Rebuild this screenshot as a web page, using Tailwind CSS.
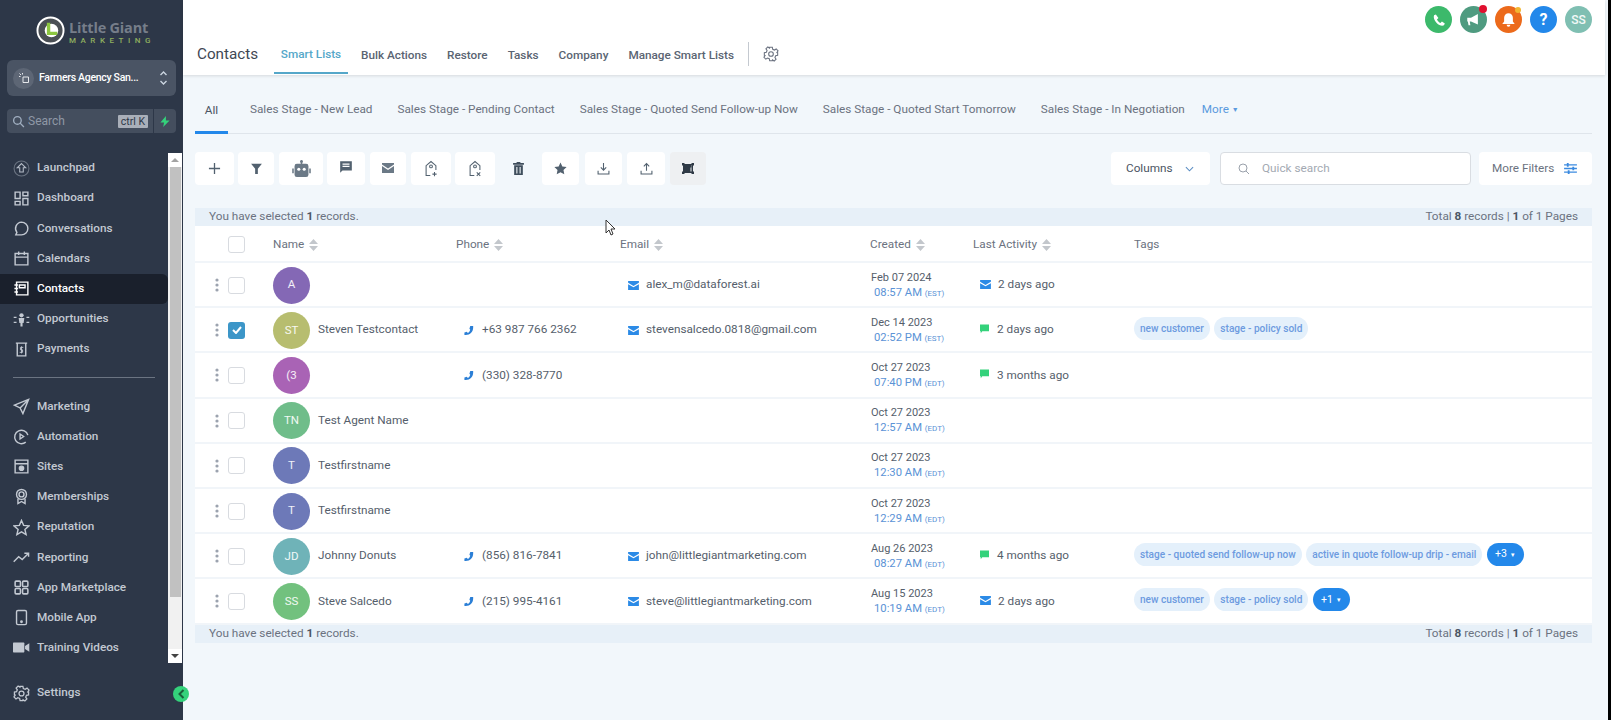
<!doctype html>
<html lang="en">
<head>
    <meta charset="UTF-8">
    <title>Contacts</title>
    <script src="https://cdn.jsdelivr.net/npm/@tailwindcss/browser@4"></script>
</head>
<body class="font-['Roboto',sans-serif] bg-[#f2f7fb] overflow-hidden">
<div class="flex w-[1611px] h-[720px] overflow-hidden relative">

    <!-- sidebar -->
    <aside class="w-[183px] shrink-0 bg-[#2d3748] flex flex-col relative">
        <div class="h-[60px] pt-[16px] pl-[36px] flex gap-[4px]">
            <svg class="w-[29px] h-[29px]" viewBox="0 0 30 30" fill="none">
                <circle cx="15" cy="15" r="13.5" fill="#4a4f55" stroke="#fff" stroke-width="2"/>
                <circle cx="16" cy="15" r="7" fill="#fff"/>
                <path d="M13 7v11h9" stroke="#8cc63f" stroke-width="3.5" fill="none"/>
            </svg>
            <div class="pt-[4px]">
                <div class="text-[#767e8a] text-[14.5px] font-bold leading-[15px] tracking-[-0.2px] whitespace-nowrap font-['Open_Sans',sans-serif]">Little Giant</div>
                <div class="text-[#8fae5f] text-[8px] font-medium leading-[10px] tracking-[4.5px] mt-[1px] whitespace-nowrap">MARKETING</div>
            </div>
        </div>

        <div class="mx-[7px] h-[36px] rounded-[6px] bg-[#4a5464] flex items-center pl-[6px] pr-[8px]">
            <div class="w-[21px] h-[21px] rounded-full bg-[#5d6675] flex items-center justify-center">
                <svg class="w-[12px] h-[12px]" viewBox="0 0 24 24" fill="none" stroke="#e5e7eb" stroke-width="2"><path d="M10 10h11v11H10zM3 3l3 3M9 2v3M2 9h3"/></svg>
            </div>
            <span class="ml-[5px] text-white text-[10.5px] tracking-[-0.3px] font-medium whitespace-nowrap">Farmers Agency San...</span>
            <svg class="w-[9px] h-[16px] ml-auto" viewBox="0 0 9 16" fill="none" stroke="#cbd5e0" stroke-width="1.4"><path d="M1.500 5 4.500 2l3 3M1.500 11l3 3 3-3"/></svg>
        </div>

        <div class="mx-[7px] mt-[13px] flex h-[24px]">
            <div class="w-[146px] bg-[#444e5e] rounded-l-[4px] flex items-center pl-[5px] pr-[5px]">
                <svg class="w-[13px] h-[13px]" viewBox="0 0 24 24" fill="none" stroke="#a0aec0" stroke-width="2.5"><circle cx="10" cy="10" r="7"/><path d="m15 15 7 7"/></svg>
                <span class="ml-[3px] text-[#8f98a6] text-[12px]">Search</span>
                <span class="ml-auto bg-[#a9afb9] text-[#2d3748] text-[10.5px] leading-[13px] px-[3px] rounded-[1px] whitespace-nowrap">ctrl K</span>
            </div>
            <div class="w-[23px] bg-[#444e5e] rounded-r-[4px] border-l border-[#2d3748] flex items-center justify-center">
                <svg class="w-[10px] h-[11px]" viewBox="0 0 10 12" fill="#34d27b"><path d="M6 0 0 7h4l-1 5 7-7H6z"/></svg>
            </div>
        </div>

        <nav class="mt-[20px] w-[168px] text-[#c3c9d2] text-[11.75px] font-medium">
            <a class="h-[30.2px] pl-[13px] flex items-center gap-[7px]">
                <svg class="w-[17px] h-[17px]" viewBox="0 0 24 24" fill="none" stroke="#b5bcc7" stroke-width="1.5"><circle cx="12" cy="12" r="10.5" stroke="#6b7482"/><path d="M12 5l6 6h-3.500v6h-5v-6H6z"/></svg>
                <span>Launchpad</span>
            </a>
            <a class="h-[30.2px] pl-[13px] flex items-center gap-[7px]">
                <svg class="w-[17px] h-[17px]" viewBox="0 0 24 24" fill="none" stroke="#c3c9d2" stroke-width="2"><path d="M3 3h7v9H3zM14 3h7v5h-7zM14 12h7v9h-7zM3 16h7v5H3z"/></svg>
                <span>Dashboard</span>
            </a>
            <a class="h-[30.2px] pl-[13px] flex items-center gap-[7px]">
                <svg class="w-[17px] h-[17px]" viewBox="0 0 24 24" fill="none" stroke="#c3c9d2" stroke-width="2"><path d="M12 3a9 9 0 0 1 0 18H4l1.500-3.500A9 9 0 0 1 12 3z"/></svg>
                <span>Conversations</span>
            </a>
            <a class="h-[30.2px] pl-[13px] flex items-center gap-[7px]">
                <svg class="w-[17px] h-[17px]" viewBox="0 0 24 24" fill="none" stroke="#c3c9d2" stroke-width="2"><path d="M3 5h18v16H3zM3 10h18M8 2v5M16 2v5"/></svg>
                <span>Calendars</span>
            </a>
            <a class="h-[30.2px] pl-[13px] flex items-center gap-[7px] bg-[#1a202c] rounded-r-[6px] text-white">
                <svg class="w-[17px] h-[17px]" viewBox="0 0 24 24" fill="none" stroke="#fff" stroke-width="2"><path d="M5 3h16v18H5zM9 7h8v4H9zM2 7h5M2 12h5M2 17h5"/></svg>
                <span>Contacts</span>
            </a>
            <a class="h-[30.2px] pl-[13px] flex items-center gap-[7px]">
                <svg class="w-[17px] h-[17px]" viewBox="0 0 24 24" fill="#c3c9d2"><circle cx="12" cy="6" r="3"/><path d="M8 10h8l-1 7h-1.500v5h-3v-5H9zM1 8h4v2H1zM19 8h4v2h-4zM1 15h4v2H1zM19 15h4v2h-4z"/></svg>
                <span>Opportunities</span>
            </a>
            <a class="h-[30.2px] pl-[13px] flex items-center gap-[7px]">
                <svg class="w-[17px] h-[17px]" viewBox="0 0 24 24" fill="none" stroke="#c3c9d2" stroke-width="2"><path d="M4 3h16M6 3v18h12V3"/><path d="M14.500 9h-4v3.500h3V16h-4M12 7.500v10" stroke-width="1.300"/></svg>
                <span>Payments</span>
            </a>
            <div class="my-[13px] mx-[13px] h-[1px] bg-[#6b7482]"></div>
            <a class="h-[30.2px] pl-[13px] flex items-center gap-[7px]">
                <svg class="w-[17px] h-[17px]" viewBox="0 0 24 24" fill="none" stroke="#c3c9d2" stroke-width="2"><path d="M22 2 2 10l8 4 4 8zM10 14 22 2"/></svg>
                <span>Marketing</span>
            </a>
            <a class="h-[30.2px] pl-[13px] flex items-center gap-[7px]">
                <svg class="w-[17px] h-[17px]" viewBox="0 0 24 24" fill="none" stroke="#c3c9d2" stroke-width="2"><path d="M21 10a9.500 9.500 0 1 0-3 10"/><path d="M10 8.500 15 12l-5 3.500z"/></svg>
                <span>Automation</span>
            </a>
            <a class="h-[30.2px] pl-[13px] flex items-center gap-[7px]">
                <svg class="w-[17px] h-[17px]" viewBox="0 0 24 24" fill="none" stroke="#c3c9d2" stroke-width="2"><path d="M3 3h18v18H3zM3 8h18"/><circle cx="12" cy="14.500" r="3" fill="#c3c9d2"/></svg>
                <span>Sites</span>
            </a>
            <a class="h-[30.2px] pl-[13px] flex items-center gap-[7px]">
                <svg class="w-[17px] h-[17px]" viewBox="0 0 24 24" fill="none" stroke="#c3c9d2" stroke-width="2"><circle cx="12" cy="9" r="7"/><circle cx="12" cy="9" r="3.500"/><path d="M7 15v7l5-3 5 3v-7"/></svg>
                <span>Memberships</span>
            </a>
            <a class="h-[30.2px] pl-[13px] flex items-center gap-[7px]">
                <svg class="w-[17px] h-[17px]" viewBox="0 0 24 24" fill="none" stroke="#c3c9d2" stroke-width="2"><path d="m12 2 3 7 7.500.7-5.700 5 1.700 7.300-6.500-3.900L5.500 22l1.700-7.300-5.700-5L9 9z"/></svg>
                <span>Reputation</span>
            </a>
            <a class="h-[30.2px] pl-[13px] flex items-center gap-[7px]">
                <svg class="w-[17px] h-[17px]" viewBox="0 0 24 24" fill="none" stroke="#c3c9d2" stroke-width="2"><path d="m1 18 7-7 5 4 9-9M16 6h6v5"/></svg>
                <span>Reporting</span>
            </a>
            <a class="h-[30.2px] pl-[13px] flex items-center gap-[7px]">
                <svg class="w-[17px] h-[17px]" viewBox="0 0 24 24" fill="none" stroke="#c3c9d2" stroke-width="2.200"><rect x="3" y="3" width="7.500" height="7.500" rx="1.500"/><rect x="13.500" y="3" width="7.500" height="7.500" rx="1.500"/><rect x="3" y="13.500" width="7.500" height="7.500" rx="1.500"/><rect x="13.500" y="13.500" width="7.500" height="7.500" rx="1.500"/></svg>
                <span>App Marketplace</span>
            </a>
            <a class="h-[30.2px] pl-[13px] flex items-center gap-[7px]">
                <svg class="w-[17px] h-[17px]" viewBox="0 0 24 24" fill="none" stroke="#c3c9d2" stroke-width="2"><rect x="5" y="2" width="14" height="20" rx="2"/><circle cx="12" cy="18" r="1" fill="#c3c9d2"/></svg>
                <span>Mobile App</span>
            </a>
            <a class="h-[30.2px] pl-[13px] flex items-center gap-[7px]">
                <svg class="w-[17px] h-[17px]" viewBox="0 0 24 24" fill="#c3c9d2"><rect x="0" y="5" width="16" height="14" rx="1"/><path d="m17 10 6-4v12l-6-4z"/></svg>
                <span>Training Videos</span>
            </a>
        </nav>

        <!-- sidebar scrollbar -->
        <div class="absolute left-[168px] top-[153px] w-[14px] h-[510px] bg-[#f1f1f1] flex flex-col">
            <div class="h-[14px] flex items-center justify-center bg-white"><div class="w-0 h-0 border-x-[4px] border-x-transparent border-b-[4px] border-b-[#a3a3a3]"></div></div>
            <div class="w-[11px] ml-[2px] h-[430px] bg-[#c1c1c1]"></div>
            <div class="mt-auto h-[14px] flex items-center justify-center bg-white"><div class="w-0 h-0 border-x-[4px] border-x-transparent border-t-[4px] border-t-[#444]"></div></div>
        </div>

        <a class="absolute left-[13px] top-[678px] h-[30px] flex items-center gap-[7px] text-[#c3c9d2] text-[11.75px] font-medium">
            <svg class="w-[17px] h-[17px]" viewBox="0 0 24 24" fill="none" stroke="#c3c9d2" stroke-width="1.800"><circle cx="12" cy="12" r="3.500"/><path d="M10 2h4l.6 3 2.600 1.100 2.600-1.700 2.800 2.800-1.700 2.600L22 10v4l-3 .6-1.100 2.600 1.700 2.600-2.800 2.800-2.600-1.700L14 22h-4l-.6-2.900-2.600-1.100-2.600 1.700-2.800-2.800 1.700-2.600L2 14v-4l3-.6 1.100-2.600-1.700-2.600 2.800-2.800 2.600 1.700z"/></svg>
            <span>Settings</span>
        </a>
        <div class="absolute left-[173px] top-[686px] w-[16px] h-[16px] rounded-full bg-[#34d27b] z-10 flex items-center justify-center">
            <svg class="w-[9px] h-[10px]" viewBox="0 0 9 10" fill="none" stroke="#1a5e3a" stroke-width="2"><path d="M6.500 1 2.500 5l4 4"/></svg>
        </div>
    </aside>

    <!-- main -->
    <main class="flex-1 min-w-0 flex flex-col">
        <header class="h-[75px] mr-[3px] bg-white shadow-[0_1px_3px_rgba(0,0,0,0.12)] relative shrink-0 flex items-end pl-[14px] pb-[1px]">
            <div class="absolute right-[13px] top-[6px] flex gap-[8px]">
                <div class="w-[27px] h-[27px] rounded-full bg-[#3cb96b] flex items-center justify-center">
                    <svg class="w-[14px] h-[14px]" viewBox="0 0 24 24" fill="#fff"><path d="M6.600 2.500 3.500 4C2 8 4 13 8 17s9 6 12.500 4l1.500-3-5-3.500-2.500 2.500c-2.500-1-5-3.500-6-6L11 8.500z"/></svg>
                </div>
                <div class="w-[27px] h-[27px] rounded-full bg-[#4f9b80] flex items-center justify-center relative">
                    <svg class="w-[15px] h-[15px]" viewBox="0 0 24 24" fill="#fff"><path d="M2 9h6l11-6v17L8 15H6l1 6H4l-1-6H2z"/></svg>
                    <div class="absolute -top-[1px] right-[0px] w-[8px] h-[8px] rounded-full bg-[#e0102f]"></div>
                </div>
                <div class="w-[27px] h-[27px] rounded-full bg-[#ec6a1b] flex items-center justify-center relative">
                    <svg class="w-[15px] h-[15px]" viewBox="0 0 24 24" fill="#fff"><path d="M12 2a7 7 0 0 0-7 7v6l-3 4h20l-3-4V9a7 7 0 0 0-7-7zM9 20.500a3 3 0 0 0 6 0z"/></svg>
                    <div class="absolute top-[1px] right-[1px] w-[6px] h-[6px] rounded-full bg-[#f2b632]"></div>
                </div>
                <div class="w-[27px] h-[27px] rounded-full bg-[#2388ea] flex items-center justify-center text-white text-[16px] font-bold">?</div>
                <div class="w-[27px] h-[27px] rounded-full bg-[#7fbfb2] flex items-center justify-center text-white/90 text-[12px] font-medium">SS</div>
            </div>
            <div class="text-[#3f4754] text-[15.25px] w-[77px] h-[32px] pt-[1px]">Contacts</div>
            <div class="flex text-[11.75px] text-[#5a6472] font-medium">
                <a class="w-[74px] text-center text-[#55a7c9] border-b-[2px] border-[#55a7c9] h-[32px] pt-[4px]">Smart Lists</a>
                <a class="ml-[13px] pt-[5px]">Bulk Actions</a>
                <a class="ml-[20px] pt-[5px]">Restore</a>
                <a class="ml-[20px] pt-[5px]">Tasks</a>
                <a class="ml-[20px] pt-[5px]">Company</a>
                <a class="ml-[20px] pt-[5px]">Manage Smart Lists</a>
                <div class="ml-[14px] w-[1px] h-[24px] bg-[#c4c9d0]"></div>
                <svg class="ml-[14px] mt-[4px] w-[16px] h-[16px]" viewBox="0 0 24 24" fill="none" stroke="#6b7280" stroke-width="1.600"><circle cx="12" cy="12" r="3.500"/><path d="M10 2h4l.6 3 2.600 1.100 2.600-1.700 2.800 2.800-1.700 2.600L22 10v4l-3 .6-1.100 2.600 1.700 2.600-2.800 2.800-2.600-1.700L14 22h-4l-.6-2.900-2.600-1.100-2.600 1.700-2.800-2.800 1.700-2.600L2 14v-4l3-.6 1.100-2.600-1.700-2.600 2.800-2.800 2.600 1.700z"/></svg>
            </div>
        </header>

        <div class="pl-[12px] pr-[16px]">
            <!-- smart list tabs -->
            <div class="h-[59px] flex items-end border-b border-[#dfe5eb] text-[11.75px] text-[#6b7280]">
                <a class="w-[33px] h-[43px] pt-[11px] text-center text-[#4b5563] border-b-[3px] border-[#2388ea] -mb-[1px]">All</a>
                <a class="ml-[22px] h-[43px] pt-[11px]">Sales Stage - New Lead</a>
                <a class="ml-[25px] h-[43px] pt-[11px]">Sales Stage - Pending Contact</a>
                <a class="ml-[25px] h-[43px] pt-[11px]">Sales Stage - Quoted Send Follow-up Now</a>
                <a class="ml-[25px] h-[43px] pt-[11px]">Sales Stage - Quoted Start Tomorrow</a>
                <a class="ml-[25px] h-[43px] pt-[11px]">Sales Stage - In Negotiation</a>
                <a class="ml-[17px] h-[43px] pt-[11px] text-[#5a9ade]">More <span class="text-[7px] align-[1px]">▼</span></a>
            </div>

            <!-- toolbar -->
            <div class="mt-[18px] h-[33px] flex items-stretch">
                <button class="w-[39px] bg-white rounded-[4px] flex items-center justify-center mr-[4px]"><svg class="w-[13px] h-[13px]" viewBox="0 0 14 14" stroke="#52616f" stroke-width="1.400"><path d="M7 1v12M1 7h12"/></svg></button>
                <button class="w-[36px] bg-white rounded-[4px] flex items-center justify-center mr-[5px]"><svg class="w-[13px] h-[13px]" viewBox="0 0 24 24" fill="#52616f"><path d="M2 3h20l-7.500 9.500V22h-5v-9.500z"/></svg></button>
                <button class="w-[44px] bg-white rounded-[4px] flex items-center justify-center mr-[4px]"><svg class="w-[19px] h-[17px]" viewBox="0 0 24 22" fill="#6b7986"><path d="M12 0a2 2 0 0 1 1 3.700V5h5a3 3 0 0 1 3 3v11a3 3 0 0 1-3 3H6a3 3 0 0 1-3-3V8a3 3 0 0 1 3-3h5V3.700A2 2 0 0 1 12 0zM0 11h2v6H0zM22 11h2v6h-2z"/><circle cx="8.500" cy="12" r="2" fill="#fff"/><circle cx="15.500" cy="12" r="2" fill="#fff"/></svg></button>
                <button class="w-[38px] bg-white rounded-[4px] flex items-center justify-center mr-[5px]"><svg class="w-[14px] h-[14px] -mt-[3px]" viewBox="0 0 24 24" fill="#52616f"><path d="M2 2h20v16H6l-4 4zM6 6v2h12V6zM6 10v2h12v-2z"/></svg></button>
                <button class="w-[36px] bg-white rounded-[4px] flex items-center justify-center mr-[5px]"><svg class="w-[12px] h-[10px] -mt-[2px]" viewBox="0 0 24 20" fill="#6b7986"><path d="M0 0h24v3L12 11 0 3zM0 6l12 8 12-8v14H0z"/></svg></button>
                <button class="w-[40px] bg-white rounded-[4px] flex items-center justify-center mr-[4px]"><svg class="w-[14px] h-[17px]" viewBox="0 0 20 24" fill="none" stroke="#52616f" stroke-width="1.500"><path d="M9 22H3V8l7-6 7 6v6"/><circle cx="10" cy="9" r="2"/><path d="M15 17v6M12 20h6"/></svg></button>
                <button class="w-[40px] bg-white rounded-[4px] flex items-center justify-center mr-[5px]"><svg class="w-[14px] h-[17px]" viewBox="0 0 20 24" fill="none" stroke="#52616f" stroke-width="1.500"><path d="M9 22H3V8l7-6 7 6v6"/><circle cx="10" cy="9" r="2"/><path d="m12.500 17.500 5 5M17.500 17.500l-5 5"/></svg></button>
                <button class="w-[37px] flex items-center justify-center mr-[5px]"><svg class="w-[11px] h-[13px]" viewBox="0 0 20 24" fill="#3f4e5c"><path d="M7 0h6l1 2h6v3H0V2h6zM2 6h16v18H2zM6 9v12h2V9zM12 9v12h2V9z"/></svg></button>
                <button class="w-[37px] bg-white rounded-[4px] flex items-center justify-center mr-[6px]"><svg class="w-[13px] h-[13px]" viewBox="0 0 24 24" fill="#52616f"><path d="m12 1 3.400 7.300 7.900 1-5.800 5.500 1.500 8L12 18.900l-7 3.900 1.500-8L.7 9.300l7.900-1z"/></svg></button>
                <button class="w-[37px] bg-white rounded-[4px] flex items-center justify-center mr-[5px]"><svg class="w-[13px] h-[13px]" viewBox="0 0 24 24" fill="none" stroke="#52616f" stroke-width="2"><path d="M12 2v13M7 10l5 5 5-5M2 16v6h20v-6"/></svg></button>
                <button class="w-[38px] bg-white rounded-[4px] flex items-center justify-center mr-[5px]"><svg class="w-[13px] h-[13px]" viewBox="0 0 24 24" fill="none" stroke="#52616f" stroke-width="2"><path d="M12 16V3M7 8l5-5 5 5M2 16v6h20v-6"/></svg></button>
                <button class="w-[36px] bg-[#eef0f2] rounded-[4px] flex items-center justify-center"><svg class="w-[12px] h-[11px]" viewBox="0 0 24 22" fill="#2f3a46"><path d="M0 0h5v2h14V0h5v5h-2v12h2v5h-5v-2H5v2H0v-5h2V5H0z"/><path d="M5 4h14v13h-2V4z" fill="#eef0f2"/><path d="M13 4h6v5h-6z"/></svg></button>
                <button class="ml-auto w-[99px] bg-white rounded-[4px] flex items-center text-[11.75px] text-[#4b5563] pl-[15px]">Columns<svg class="ml-[12px] w-[9px] h-[6px]" viewBox="0 0 10 6" fill="none" stroke="#5b8ec4" stroke-width="1.200"><path d="m1 1 4 4 4-4"/></svg></button>
                <div class="ml-[10px] w-[251px] bg-white rounded-[4px] border border-[#d9dde2] flex items-center pl-[17px] text-[11.75px] text-[#a3a9b2]"><svg class="w-[12px] h-[12px] mr-[12px]" viewBox="0 0 24 24" fill="none" stroke="#9aa1ab" stroke-width="2"><circle cx="10" cy="10" r="8"/><path d="m16 16 6 6"/></svg>Quick search</div>
                <button class="ml-[8px] w-[113px] bg-white rounded-[4px] flex items-center text-[11.75px] text-[#6b7280] pl-[13px]">More Filters<svg class="ml-[10px] w-[13px] h-[11px]" viewBox="0 0 14 12" stroke="#3b8ae0" stroke-width="1.500"><path d="M0 2h14M0 6h14M0 10h14"/><path d="M4 0v4M10 4v4M5 8v4" stroke-width="2"/></svg></button>
            </div>

            <!-- table -->
            <div class="mt-[23px] h-[18px] bg-[#e7f0f8] flex items-center justify-between px-[14px] text-[11.75px] text-[#6b7280]">
                <span>You have selected <b class="font-bold text-[#4b5563]">1</b> records.</span>
                <span>Total <b class="font-bold text-[#4b5563]">8</b> records | <b class="font-bold text-[#4b5563]">1</b> of 1 Pages</span>
            </div>
            <div class="h-[37px] bg-white border-b-[2px] border-[#f1f5f9] grid grid-cols-[78px_183px_164px_250px_103px_161px_1fr] items-center text-[11.75px] text-[#6b7280] pt-[2px]">
                <div class="pl-[33px]"><div class="w-[17px] h-[17px] rounded-[3px] border border-[#d8dbe0] bg-white"></div></div>
                <div class="flex items-center gap-[5px]">Name<svg class="w-[9px] h-[12px]" viewBox="0 0 9 12" fill="#c3c7cc"><path d="M4.500 0 9 5H0zM0 7h9l-4.500 5z"/></svg></div>
                <div class="flex items-center gap-[5px]">Phone<svg class="w-[9px] h-[12px]" viewBox="0 0 9 12" fill="#c3c7cc"><path d="M4.500 0 9 5H0zM0 7h9l-4.500 5z"/></svg></div>
                <div class="flex items-center gap-[5px]">Email<svg class="w-[9px] h-[12px]" viewBox="0 0 9 12" fill="#c3c7cc"><path d="M4.500 0 9 5H0zM0 7h9l-4.500 5z"/></svg></div>
                <div class="flex items-center gap-[5px]">Created<svg class="w-[9px] h-[12px]" viewBox="0 0 9 12" fill="#c3c7cc"><path d="M4.500 0 9 5H0zM0 7h9l-4.500 5z"/></svg></div>
                <div class="flex items-center gap-[5px] whitespace-nowrap">Last Activity<svg class="w-[9px] h-[12px]" viewBox="0 0 9 12" fill="#c3c7cc"><path d="M4.500 0 9 5H0zM0 7h9l-4.500 5z"/></svg></div>
                <div>Tags</div>
            </div>

            <div id="rows"></div>

            <div class="h-[18px] bg-[#e7f0f8] flex items-center justify-between px-[14px] text-[11.75px] text-[#6b7280]">
                <span>You have selected <b class="font-bold text-[#4b5563]">1</b> records.</span>
                <span>Total <b class="font-bold text-[#4b5563]">8</b> records | <b class="font-bold text-[#4b5563]">1</b> of 1 Pages</span>
            </div>
        </div>
    </main>

    <!-- black edge of the capture -->
    <div class="w-[3px] shrink-0 bg-black"></div>

    <!-- mouse pointer -->
    <svg class="absolute left-[605px] top-[219px] w-[11px] h-[17px]" viewBox="0 0 11 17" fill="#fff" stroke="#333" stroke-width="1"><path d="M1 1v13l3-3 2 5 2-1-2-5h4z"/></svg>
</div>

<script>
    const mailIcon = (cls) => `<svg class="${cls}" viewBox="0 0 24 20" fill="#2b8ae6"><path d="M0 0h24v4L12 11 0 4zM0 7l12 7 12-7v13H0z"/></svg>`;
    const chatIcon = `<svg class="w-[9px] h-[10px] -mt-[3px]" viewBox="0 0 24 24" fill="#34d27b"><path d="M0 0h24v18H6l-4 5V18H0z"/></svg>`;
    const phoneIcon = `<svg class="w-[10px] h-[11px]" viewBox="0 0 24 24" fill="#2b7fd6"><path d="M15 1h7v4c0 10-7 18-18 18H1v-6l6-2 2 3c3-2 5-4 6-8l-2-2z"/></svg>`;

    const contacts = [
        { init: "A", color: "bg-[#8468b5]", email: "alex_m@dataforest.ai", date: "Feb 07 2024", time: "08:57 AM", tz: "(EST)", act: "mail", ago: "2 days ago" },
        { init: "ST", color: "bg-[#b7bd6f]", name: "Steven Testcontact", phone: "+63 987 766 2362", email: "stevensalcedo.0818@gmail.com", date: "Dec 14 2023", time: "02:52 PM", tz: "(EST)", act: "chat", ago: "2 days ago", tags: ["new customer", "stage - policy sold"], checked: true },
        { init: "(3", color: "bg-[#a963b5]", phone: "(330) 328-8770", date: "Oct 27 2023", time: "07:40 PM", tz: "(EDT)", act: "chat", ago: "3 months ago" },
        { init: "TN", color: "bg-[#6fbd8a]", name: "Test Agent Name", date: "Oct 27 2023", time: "12:57 AM", tz: "(EDT)" },
        { init: "T", color: "bg-[#6d79b8]", name: "Testfirstname", date: "Oct 27 2023", time: "12:30 AM", tz: "(EDT)" },
        { init: "T", color: "bg-[#6d79b8]", name: "Testfirstname", date: "Oct 27 2023", time: "12:29 AM", tz: "(EDT)" },
        { init: "JD", color: "bg-[#6fb3b8]", name: "Johnny Donuts", phone: "(856) 816-7841", email: "john@littlegiantmarketing.com", date: "Aug 26 2023", time: "08:27 AM", tz: "(EDT)", act: "chat", ago: "4 months ago", tags: ["stage - quoted send follow-up now", "active in quote follow-up drip - email"], more: "+3" },
        { init: "SS", color: "bg-[#72c17e]", name: "Steve Salcedo", phone: "(215) 995-4161", email: "steve@littlegiantmarketing.com", date: "Aug 15 2023", time: "10:19 AM", tz: "(EDT)", act: "mail", ago: "2 days ago", tags: ["new customer", "stage - policy sold"], more: "+1" },
    ];

    const rowHtml = (c) => {
        const box = c.checked
            ? `<div class="w-[17px] h-[17px] rounded-[3px] bg-[#3c96c8] flex items-center justify-center"><svg class="w-[10px] h-[8px]" viewBox="0 0 10 8" fill="none" stroke="#fff" stroke-width="2"><path d="m1 4 3 3 5-6"/></svg></div>`
            : `<div class="w-[17px] h-[17px] rounded-[3px] border border-[#d8dbe0] bg-white"></div>`;
        const activity = c.act === "mail"
            ? `<div class="flex items-center gap-[7px] pl-[7px] whitespace-nowrap">${mailIcon("w-[11px] h-[9px] -mt-[1px]")}${c.ago}</div>`
            : c.act === "chat"
                ? `<div class="flex items-center gap-[8px] pl-[7px] whitespace-nowrap">${chatIcon}${c.ago}</div>`
                : `<div></div>`;
        const tags = (c.tags || []).map((t) => `<span class="h-[23px] px-[6px] rounded-full bg-[#e4f0fb] text-[#6d9be0] text-[10.1px] font-medium flex items-center whitespace-nowrap">${t}</span>`).join("");
        const more = c.more ? `<span class="h-[23px] w-[37px] rounded-full bg-[#2388ea] text-white text-[10.5px] flex items-center justify-center gap-[3px]">${c.more}<span class="text-[6px]">▼</span></span>` : "";
        return `<div class="h-[45.2px] bg-white border-b-[2px] border-[#f1f5f9] grid grid-cols-[78px_183px_164px_250px_103px_161px_1fr] items-center text-[11.75px] text-[#555e6b] pt-[1px]">
            <div class="flex items-center pl-[20px] gap-[9px]"><svg class="w-[4px] h-[14px]" viewBox="0 0 4 14" fill="#9ca3af"><circle cx="2" cy="2" r="1.600"/><circle cx="2" cy="7" r="1.600"/><circle cx="2" cy="12" r="1.600"/></svg>${box}</div>
            <div class="flex items-center gap-[8px] whitespace-nowrap"><div class="w-[37px] h-[37px] rounded-full ${c.color} text-white/90 text-[11.5px] flex items-center justify-center shrink-0">${c.init}</div>${c.name || ""}</div>
            <div class="flex items-center pl-[8px] gap-[8px]">${c.phone ? phoneIcon + c.phone : ""}</div>
            <div class="flex items-center pl-[8px] gap-[7px]">${c.email ? mailIcon("w-[11px] h-[9px]") + c.email : ""}</div>
            <div class="leading-[15px] whitespace-nowrap pl-[1px]"><div class="text-[11px] text-[#555e6b]">${c.date}</div><div class="pl-[3px] text-[11.25px] text-[#5b93d6]">${c.time} <span class="text-[8px]">${c.tz}</span></div></div>
            ${activity}
            <div class="flex items-center gap-[4.5px] -mt-[4px]">${tags}${more}</div>
        </div>`;
    };
    document.getElementById("rows").innerHTML = contacts.map(rowHtml).join("");
</script>
</body>
</html>
